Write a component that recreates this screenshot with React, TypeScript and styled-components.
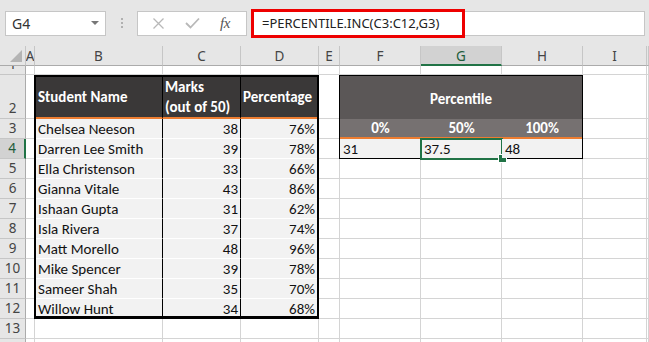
import React from "react";
import styled, { createGlobalStyle, css } from "styled-components";

const GlobalStyle = createGlobalStyle`
  html, body { margin: 0; padding: 0; background: #e6e6e6; }
  * { box-sizing: border-box; }
`;

const UI_FONT = `"Noto Sans", "Open Sans", sans-serif`;
const CELL_FONT = `Carlito, Lato, "Noto Sans", sans-serif`;
const GREEN = "#217346";
const GRID = "#d4d4d4";

const Window = styled.div`
  width: 649px;
  height: 342px;
  overflow: hidden;
  background: #e6e6e6;
  display: flex;
  flex-direction: column;
`;

const FormulaBar = styled.div`
  height: 46px;
  flex-shrink: 0;
  display: flex;
  align-items: center;
  padding: 0 4px 0 5px;
`;

const NameBox = styled.div`
  width: 101px;
  height: 25px;
  background: #fff;
  border: 1px solid #c6c6c6;
  display: flex;
  align-items: center;
  justify-content: space-between;
  padding: 0 6px 0 6px;
  font-family: ${UI_FONT};
  font-size: 14px;
  color: #333;
`;

const DropArrow = styled.span`
  width: 0;
  height: 0;
  border-left: 4px solid transparent;
  border-right: 4px solid transparent;
  border-top: 4px solid #777;
`;

const Dots = styled.div`
  width: 31px;
  display: flex;
  flex-direction: column;
  align-items: center;
  gap: 2px;
  & > span {
    width: 2px;
    height: 2px;
    background: #b0b0b0;
  }
`;

const FuncBox = styled.div`
  width: 110px;
  height: 25px;
  background: #fff;
  border: 1px solid #c6c6c6;
  display: flex;
  align-items: center;
  justify-content: space-around;
  padding: 0 6px 0 4px;
`;

const Fx = styled.span`
  font-family: "Liberation Serif", serif;
  font-style: italic;
  font-size: 15px;
  color: #555;
  letter-spacing: -0.5px;
`;

const FormulaField = styled.div`
  margin-left: 4px;
  flex: 1;
  height: 25px;
  background: #fff;
  border: 1px solid #c6c6c6;
  display: flex;
  align-items: center;
`;

const RedBox = styled.div`
  width: 214px;
  height: 29px;
  margin-left: -1px;
  border: 3px solid #ee0000;
  display: flex;
  align-items: center;
  padding-left: 8px;
  font-family: ${UI_FONT};
  font-size: 13px;
  color: #222;
  background: #fff;
`;

const Sheet = styled.div`
  display: grid;
  grid-template-columns: 26px 9px 128px 78px 78px 21px 81px 81px 81px 64px 1fr;
  grid-template-rows: 20px 9px 44px repeat(11, 20px) 20px;
  background: #fff;
  flex-shrink: 0;
`;

const Corner = styled.div`
  background: #e6e6e6;
  border-right: 1px solid #c6c6c6;
  border-bottom: 1px solid #ababab;
  position: relative;
  &::after {
    content: "";
    position: absolute;
    right: 3px;
    bottom: 3px;
    width: 0;
    height: 0;
    border-left: 12px solid transparent;
    border-bottom: 12px solid #b4b4b4;
  }
`;

const ColHead = styled.div<{ $active?: boolean }>`
  background: ${(p) => (p.$active ? "#d2d2d2" : "#e6e6e6")};
  border-right: 1px solid #c6c6c6;
  border-bottom: ${(p) => (p.$active ? `2px solid ${GREEN}` : "1px solid #ababab")};
  display: flex;
  align-items: center;
  justify-content: center;
  font-family: ${UI_FONT};
  font-size: 13.5px;
  color: ${(p) => (p.$active ? "#1e5c3a" : "#444")};
  overflow: hidden;
  padding-top: 1px;
`;

const RowHead = styled.div<{ $active?: boolean }>`
  background: ${(p) => (p.$active ? "#d2d2d2" : "#e6e6e6")};
  border-right: ${(p) => (p.$active ? `2px solid ${GREEN}` : "1px solid #ababab")};
  border-bottom: 1px solid #c6c6c6;
  display: flex;
  align-items: flex-end;
  justify-content: center;
  font-family: ${UI_FONT};
  font-size: 13.5px;
  line-height: 19px;
  color: ${(p) => (p.$active ? "#1e5c3a" : "#444")};
  overflow: hidden;
`;

const Cell = styled.div`
  border-right: 1px solid ${GRID};
  border-bottom: 1px solid ${GRID};
`;

/* Student table */
const StudentTable = styled.div`
  grid-column: 3 / 6;
  grid-row: 3 / 14;
  border: 2px solid #000;
  border-bottom-width: 3px;
  margin-left: -1px;
  display: grid;
  grid-template-columns: 127px 78px 1fr;
  grid-template-rows: 42px repeat(10, 1fr);
  font-family: ${CELL_FONT};
  font-size: 15px;
  color: #111;
  z-index: 1;
  overflow: hidden;
`;

const THead = styled.div<{ $divider?: boolean }>`
  background: #3a3838;
  color: #fff;
  font-weight: 700;
  border-bottom: 2px solid #ed7d31;
  border-right: ${(p) => (p.$divider ? "1px solid #000" : "none")};
  display: flex;
  align-items: center;
  padding: 0 3px 0 2px;
  line-height: 20px;
`;

const TCell = styled.div<{ $num?: boolean; $divider?: boolean }>`
  background: #f2f2f2;
  border-bottom: 1px solid #fff;
  border-right: ${(p) => (p.$divider ? "1px solid #000" : "none")};
  display: flex;
  align-items: center;
  justify-content: ${(p) => (p.$num ? "flex-end" : "flex-start")};
  padding: 1px 2px 0 2px;
  white-space: nowrap;
  &:nth-last-child(-n + 3) {
    border-bottom: none;
  }
`;

/* Percentile block */
const PercentileBlock = styled.div`
  grid-column: 7 / 10;
  grid-row: 3 / 6;
  margin-left: -1px;
  border: 1px solid #000;
  display: grid;
  grid-template-columns: 81px 81px 1fr;
  grid-template-rows: 43px 20px 1fr;
  font-family: ${CELL_FONT};
  font-size: 15px;
  color: #111;
  z-index: 1;
`;

const PTitle = styled.div`
  grid-column: 1 / 4;
  background: #5b5757;
  color: #fff;
  font-weight: 700;
  display: flex;
  align-items: center;
  justify-content: center;
  padding-top: 2px;
`;

const PLabel = styled.div`
  background: #767171;
  color: #fff;
  font-weight: 700;
  border-bottom: 2px solid #ed7d31;
  display: flex;
  align-items: center;
  justify-content: center;
`;

const PValue = styled.div<{ $selected?: boolean }>`
  background: #f2f2f2;
  display: flex;
  align-items: center;
  padding: 1px 3px 0 3px;
  position: relative;
  ${(p) =>
    p.$selected &&
    css`
      &::before {
        content: "";
        position: absolute;
        left: -1px;
        top: -1px;
        right: -1px;
        bottom: -2px;
        border: 2px solid ${GREEN};
      }
      &::after {
        content: "";
        position: absolute;
        right: -5px;
        bottom: -5px;
        width: 7px;
        height: 7px;
        background: ${GREEN};
        border: 1px solid #fff;
      }
    `}
`;

const columns = ["A", "B", "C", "D", "E", "F", "G", "H", "I", ""];

const students: [string, number, string][] = [
  ["Chelsea Neeson", 38, "76%"],
  ["Darren Lee Smith", 39, "78%"],
  ["Ella Christenson", 33, "66%"],
  ["Gianna Vitale", 43, "86%"],
  ["Ishaan Gupta", 31, "62%"],
  ["Isla Rivera", 37, "74%"],
  ["Matt Morello", 48, "96%"],
  ["Mike Spencer", 39, "78%"],
  ["Sameer Shah", 35, "70%"],
  ["Willow Hunt", 34, "68%"],
];

function covered(row: number, col: number) {
  if (row >= 2 && row <= 12 && col >= 2 && col <= 4) return true;
  if (row >= 2 && row <= 4 && col >= 6 && col <= 8) return true;
  return false;
}

export default function App() {
  const rows = Array.from({ length: 14 }, (_, i) => i + 1);
  return (
    <>
      <GlobalStyle />
      <Window>
        <FormulaBar>
          <NameBox>
            <span>G4</span>
            <DropArrow />
          </NameBox>
          <Dots>
            <span />
            <span />
            <span />
          </Dots>
          <FuncBox>
            <svg width="13" height="13" viewBox="0 0 13 13">
              <path d="M1.5 1.5 L11.5 11.5 M11.5 1.5 L1.5 11.5" stroke="#b8b8b8" strokeWidth="1.3" fill="none" />
            </svg>
            <svg width="15" height="12" viewBox="0 0 15 12">
              <path d="M1 6 L5.5 10.5 L14 1.5" stroke="#b8b8b8" strokeWidth="1.8" fill="none" />
            </svg>
            <Fx>fx</Fx>
          </FuncBox>
          <FormulaField>
            <RedBox>=PERCENTILE.INC(C3:C12,G3)</RedBox>
          </FormulaField>
        </FormulaBar>
        <Sheet>
          <Corner />
          {columns.map((c, i) => (
            <ColHead key={"h" + i} $active={c === "G"}>
              {c}
            </ColHead>
          ))}
          {rows.map((r) => (
            <React.Fragment key={"r" + r}>
              <RowHead $active={r === 4}>{r}</RowHead>
              {columns.map((_, ci) => {
                const col = ci + 1;
                if (covered(r, col)) {
                  if (r === 2 && col === 2)
                    return (
                      <StudentTable key="table">
                        <THead $divider>Student Name</THead>
                        <THead $divider>
                          Marks
                          <br />
                          (out of 50)
                        </THead>
                        <THead>Percentage</THead>
                        {students.map(([n, m, p]) => (
                          <React.Fragment key={n}>
                            <TCell $divider>{n}</TCell>
                            <TCell $divider $num>
                              {m}
                            </TCell>
                            <TCell $num>{p}</TCell>
                          </React.Fragment>
                        ))}
                      </StudentTable>
                    );
                  if (r === 2 && col === 6)
                    return (
                      <PercentileBlock key="pct">
                        <PTitle>Percentile</PTitle>
                        <PLabel>0%</PLabel>
                        <PLabel>50%</PLabel>
                        <PLabel>100%</PLabel>
                        <PValue>31</PValue>
                        <PValue $selected>37.5</PValue>
                        <PValue>48</PValue>
                      </PercentileBlock>
                    );
                  return null;
                }
                return <Cell key={r + "-" + col} />;
              })}
            </React.Fragment>
          ))}
        </Sheet>
      </Window>
    </>
  );
}
